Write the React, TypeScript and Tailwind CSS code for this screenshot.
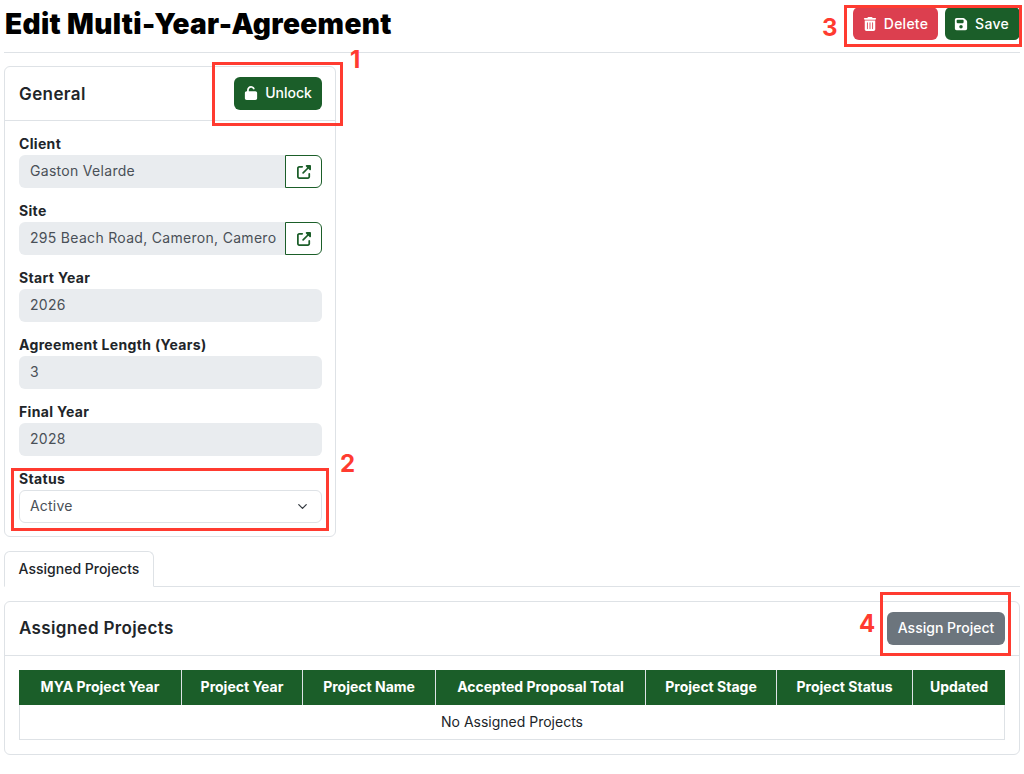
import { ChevronDown } from 'lucide-react';
import { FaFloppyDisk, FaTrashCan, FaUnlock, FaUpRightFromSquare } from 'react-icons/fa6';

const font = "font-['Inter','Noto_Sans',sans-serif]";

const columns = [
  { label: 'MYA Project Year', width: 'w-[163px]' },
  { label: 'Project Year', width: 'w-[121px]' },
  { label: 'Project Name', width: 'w-[133px]' },
  { label: 'Accepted Proposal Total', width: 'w-[210px]' },
  { label: 'Project Stage', width: 'w-[131px]' },
  { label: 'Project Status', width: 'w-[136px]' },
  { label: 'Updated', width: 'w-[92px]' },
];

const Field = ({ label, value, link }: { label: string; value: string; link?: boolean }) => (
  <div>
    <div className="h-[21px] text-[14px] leading-[20px] font-bold text-[#212529] tracking-[0.33px]">{label}</div>
    <div className="flex h-[33px]">
      <div
        className={`flex-1 min-w-0 flex items-center bg-[#e9ecef] pl-[11px] pb-[3px] text-[14px] tracking-[0.3px] text-[#495057] whitespace-nowrap overflow-hidden ${
          link ? 'rounded-l-md' : 'rounded-md'
        }`}>
        {value}
      </div>
      {link && (
        <div className="w-[37px] shrink-0 flex items-center justify-center bg-white border border-[#1b5e29] rounded-r-md text-[#1b5e29]">
          <FaUpRightFromSquare size={14} />
        </div>
      )}
    </div>
  </div>
);

const Marker = ({ n, className }: { n: number; className: string }) => (
  <span className={`absolute text-[24px] leading-none font-bold text-[#ff3b30] ${className}`}>{n}</span>
);

const Box = ({ className }: { className: string }) => (
  <div className={`absolute border-[3px] border-[#ff3b30] ${className}`} />
);

export default function App() {
  return (
    <div className={`${font} relative w-[1024px] h-[774px] overflow-hidden bg-white text-[#212529]`}>
      <div className="pl-[4px] pr-[4px]">
        <div className="flex items-center justify-between h-[53px] border-b border-[#dee2e6] pb-[5px]">
          <h1 className="text-[28px] leading-none font-black text-black tracking-[0.36px] pl-[1px]">
            Edit Multi-Year-Agreement
          </h1>
          <div className="flex gap-[7px]">
            <button className="flex items-center gap-[7px] h-[33px] w-[85px] justify-center rounded-md bg-[#dc3f4f] text-white text-[14px] font-medium tracking-[0.25px]">
              <FaTrashCan size={14} />
              Delete
            </button>
            <button className="flex items-center gap-[7px] pr-[2px] h-[33px] w-[75px] justify-center rounded-md bg-[#1b5e29] text-white text-[14px] font-medium tracking-[0.25px]">
              <FaFloppyDisk size={14} />
              Save
            </button>
          </div>
        </div>

        <section className="mt-[13px] w-[332px] h-[471px] border border-[#dee2e6] rounded-md">
          <div className="flex items-center justify-between h-[54px] pl-[14px] pr-[13px] border-b border-[#dee2e6]">
            <h2 className="pt-[2px] text-[17px] font-semibold tracking-[0.4px]">General</h2>
            <button className="flex items-center justify-center gap-[7px] pb-[2px] h-[33px] w-[88px] rounded-md bg-[#1b5e29] text-white text-[14px] font-medium">
              <FaUnlock size={14} />
              Unlock
            </button>
          </div>
          <div className="flex flex-col gap-[13px] pl-[14px] pr-[13px] pt-[13px]">
            <Field label="Client" value="Gaston Velarde" link />
            <Field label="Site" value="295 Beach Road, Cameron, Camero" link />
            <Field label="Start Year" value="2026" />
            <Field label="Agreement Length (Years)" value="3" />
            <Field label="Final Year" value="2028" />
            <div>
              <div className="h-[21px] text-[14px] leading-[20px] font-bold tracking-[0.33px]">Status</div>
              <div className="flex items-center justify-between h-[33px] pl-[10px] pr-[11px] border border-[#dee2e6] rounded-md text-[14px] tracking-[0.2px] text-[#495057]">
                <span className="pb-[2px]">Active</span>
                <ChevronDown size={15} className="text-[#343a40]" />
              </div>
            </div>
          </div>
        </section>

        <div className="mt-[14px] h-[36px] border-b border-[#dee2e6]">
          <div className="flex items-center justify-center w-[150px] h-[36px] pb-[2px] border border-b-white border-[#dee2e6] rounded-t-md text-[14px] font-medium bg-white">
            Assigned Projects
          </div>
        </div>

        <section className="mt-[14px] h-[154px] border border-[#dee2e6] rounded-md">
          <div className="flex items-center justify-between h-[54px] px-[14px] border-b border-[#dee2e6]">
            <h2 className="text-[17px] font-semibold tracking-[0.35px]">Assigned Projects</h2>
            <button className="h-[33px] w-[118px] pb-[2px] rounded-md bg-[#6c757d] text-white text-[14px] font-medium">
              Assign Project
            </button>
          </div>
          <div className="px-[14px] pt-[14px]">
            <div className="flex h-[35px] bg-[#1b5e29] divide-x divide-[#dee2e6]">
              {columns.map((col) => (
                <div
                  key={col.label}
                  className={`${col.width} shrink-0 flex items-center justify-center pb-[2px] text-[14px] font-bold text-white whitespace-nowrap`}>
                  {col.label}
                </div>
              ))}
            </div>
            <div className="flex items-center justify-center h-[35px] pb-[2px] border border-t-0 border-[#dee2e6] text-[14px]">
              No Assigned Projects
            </div>
          </div>
        </section>
      </div>

      {/* red annotations drawn over the page */}
      <Box className="left-[212px] top-[62px] w-[131px] h-[64px]" />
      <Marker n={1} className="left-[350px] top-[48px]" />
      <Box className="left-[11px] top-[468px] w-[318px] h-[63px]" />
      <Marker n={2} className="left-[340px] top-[452px]" />
      <Box className="left-[844px] top-[5px] w-[178px] h-[42px]" />
      <Marker n={3} className="left-[822px] top-[16px]" />
      <Box className="left-[880px] top-[592px] w-[131px] h-[64px]" />
      <Marker n={4} className="left-[859px] top-[612px]" />
    </div>
  );
}
